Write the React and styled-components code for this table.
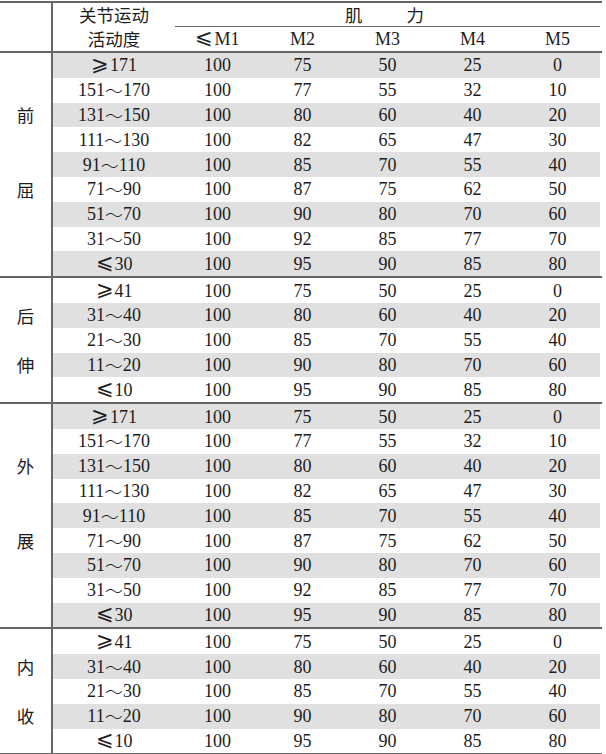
import React from "react";
import styled, { createGlobalStyle } from "styled-components";

const Global = createGlobalStyle`
  html, body { margin: 0; padding: 0; background: #fff; }
  body {
    font-family: "Liberation Serif", "Noto Sans CJK SC", "DejaVu Serif", serif;
    color: #1c1c1c;
  }
`;

const LINE = "#666";
const COLS = "53px 122px repeat(5, 85px)";

const Page = styled.div`
  padding-top: 1px;
  width: 602px;
`;

const Table = styled.div`
  width: 602px;
  border-top: 2px solid ${LINE};
  border-bottom: 2px solid ${LINE};
  font-size: 18px;
`;

const Header = styled.div`
  display: grid;
  grid-template-columns: ${COLS};
  grid-template-rows: 23.5px 24.5px;
`;

const Corner = styled.div`
  grid-row: 1 / span 2;
  grid-column: 1;
  border-right: 2px solid ${LINE};
`;

const HeadCell = styled.div`
  display: flex;
  align-items: center;
  justify-content: center;
  line-height: 1;
  grid-row: ${(p) => p.$row};
  grid-column: ${(p) => p.$col};
  font-family: ${(p) => (p.$cjk ? '"Noto Sans CJK SC", sans-serif' : "inherit")};
  font-size: ${(p) => (p.$cjk ? "17.5px" : "inherit")};
`;

const GroupHead = styled(HeadCell)`
  border-bottom: 1.3px solid ${LINE};
  gap: 44px;
  padding-right: 6px;
  font-family: "Noto Sans CJK SC", sans-serif;
  font-size: 17.5px;
`;

const Section = styled.div`
  border-top: 2px solid ${LINE};
`;

const Row = styled.div`
  display: grid;
  grid-template-columns: ${COLS};
  height: 24.8px;
`;

const Label = styled.div`
  border-right: 2px solid ${LINE};
  background: #fff;
  display: flex;
  align-items: center;
  justify-content: center;
  font-family: "Noto Sans CJK SC", sans-serif;
  font-size: 17.5px;
  line-height: 1;
`;

const Cell = styled.div`
  background: ${(p) => (p.$shade ? "#e0e0e0" : "#fff")};
  display: flex;
  align-items: center;
  justify-content: center;
  line-height: 1;
  white-space: nowrap;
`;

const Sym = styled.span`
  font-family: "DejaVu Serif", serif;
  font-size: 21px;
  font-weight: 300;
  margin-right: 1px;
  position: relative;
  top: -1px;
`;

const Tilde = styled.span`
  font-family: "Noto Sans CJK SC", sans-serif;
  font-weight: 300;
`;

const flexRows = [
  ["ge", "171", [100, 75, 50, 25, 0]],
  ["151", "170", [100, 77, 55, 32, 10]],
  ["131", "150", [100, 80, 60, 40, 20]],
  ["111", "130", [100, 82, 65, 47, 30]],
  ["91", "110", [100, 85, 70, 55, 40]],
  ["71", "90", [100, 87, 75, 62, 50]],
  ["51", "70", [100, 90, 80, 70, 60]],
  ["31", "50", [100, 92, 85, 77, 70]],
  ["le", "30", [100, 95, 90, 85, 80]],
];

const extRows = [
  ["ge", "41", [100, 75, 50, 25, 0]],
  ["31", "40", [100, 80, 60, 40, 20]],
  ["21", "30", [100, 85, 70, 55, 40]],
  ["11", "20", [100, 90, 80, 70, 60]],
  ["le", "10", [100, 95, 90, 85, 80]],
];

const sections = [
  { rows: flexRows, labels: { 2: "前", 5: "屈" } },
  { rows: extRows, labels: { 1: "后", 3: "伸" } },
  { rows: flexRows, labels: { 2: "外", 5: "展" } },
  { rows: extRows, labels: { 1: "内", 3: "收" } },
];

function Range({ a, b }) {
  if (a === "ge")
    return (
      <>
        <Sym>⩾</Sym>
        {b}
      </>
    );
  if (a === "le")
    return (
      <>
        <Sym>⩽</Sym>
        {b}
      </>
    );
  return (
    <>
      {a}
      <Tilde>～</Tilde>
      {b}
    </>
  );
}

export default function App() {
  let idx = 0;
  return (
    <Page>
      <Global />
      <Table>
        <Header>
          <Corner />
          <HeadCell $row={1} $col={2} $cjk>
            关节运动
          </HeadCell>
          <GroupHead $row={1} $col="3 / span 5">
            <span>肌</span>
            <span>力</span>
          </GroupHead>
          <HeadCell $row={2} $col={2} $cjk>
            活动度
          </HeadCell>
          <HeadCell $row={2} $col={3}>
            <Sym>⩽</Sym>M1
          </HeadCell>
          <HeadCell $row={2} $col={4}>M2</HeadCell>
          <HeadCell $row={2} $col={5}>M3</HeadCell>
          <HeadCell $row={2} $col={6}>M4</HeadCell>
          <HeadCell $row={2} $col={7}>M5</HeadCell>
        </Header>
        {sections.map((sec, si) => (
          <Section key={si}>
            {sec.rows.map(([a, b, vals], ri) => {
              const shade = idx % 2 === 0;
              idx += 1;
              return (
                <Row key={ri}>
                  <Label>{sec.labels[ri] || ""}</Label>
                  <Cell $shade={shade}>
                    <Range a={a} b={b} />
                  </Cell>
                  {vals.map((v, vi) => (
                    <Cell key={vi} $shade={shade}>
                      {v}
                    </Cell>
                  ))}
                </Row>
              );
            })}
          </Section>
        ))}
      </Table>
    </Page>
  );
}
